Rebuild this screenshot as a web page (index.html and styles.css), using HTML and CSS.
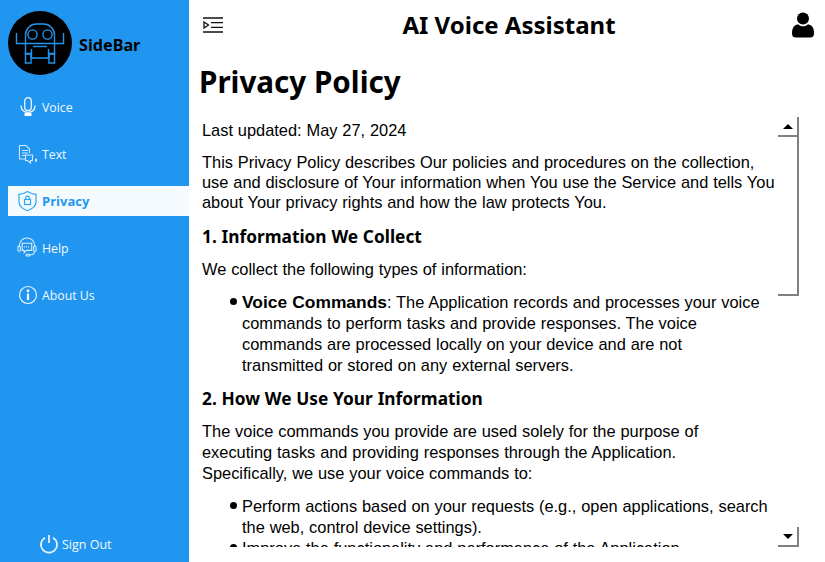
FILE: index.html
```html
<!DOCTYPE html>
<html lang="en">
<head>
<meta charset="utf-8">
<title>AI Voice Assistant</title>
<link rel="stylesheet" href="styles.css">
</head>
<body>
<div class="app">
  <aside class="sidebar">
    <div class="brand">
      <svg class="logo" width="64" height="64" viewBox="0 0 64 64">
        <circle cx="32" cy="32" r="32" fill="#000"/>
        <g fill="none" stroke="#2196f0" stroke-width="1.400">
          <path d="M17.500 32v-8a11 11 0 0 1 11-11h7a11 11 0 0 1 11 11v8"/>
          <circle cx="24.500" cy="23.500" r="4.600"/>
          <circle cx="39.500" cy="23.500" r="4.600"/>
          <path d="M8.500 22v10.500h47V22"/>
          <path d="M25 35.500h14"/>
          <path d="M17.500 32.500v10h6M46.500 32.500v10h-6"/>
          <path d="M23.500 38v9h17v-9"/>
          <path d="M17.500 43h5.500v9h-5.500zM41 43h5.500v9H41z"/>
        </g>
      </svg>
      <span class="brand-name">SideBar</span>
    </div>
    <nav class="nav">
      <a class="nav-item">
        <svg class="nav-icon" width="20" height="22" viewBox="0 0 20 22" fill="none" stroke="#eef7ff" stroke-width="1.300">
          <rect x="7.700" y="1.700" width="6.600" height="12.800" rx="3.300"/>
          <path d="M4 9.500c0 4.500 2.800 6.800 7 6.800s7-2.300 7-6.800"/>
          <path d="M7.500 18.500h7" stroke="#fff" stroke-width="3"/>
        </svg>
        <span>Voice</span>
      </a>
      <a class="nav-item">
        <svg class="nav-icon" width="20" height="22" viewBox="0 0 20 22" fill="none" stroke="#cfe8fd" stroke-width="1.100">
          <path d="M8 16H2.500V2.500h6.500l3.500 3.500V10"/>
          <path d="M5 7.500h6M5 10h6M5 12.500h3"/>
          <path d="M8.500 12h7v5.500h-2v2.500l-3-2.500h-2z"/>
          <path d="M18.500 16h1v2.500h-1z" stroke-width="1"/>
        </svg>
        <span>Text</span>
      </a>
      <a class="nav-item active">
        <svg class="nav-icon" width="20" height="22" viewBox="0 0 20 22" fill="none" stroke="#2aa5f2" stroke-width="1.200">
          <path d="M10.500 1.500c2.500 1.600 5 2.600 8.500 2.800V12c0 4-3.500 6.800-8.500 8.700C5.500 18.800 2 16 2 12V4.300c3.500-.2 6-1.200 8.500-2.800z"/>
          <rect x="7.500" y="9.500" width="6" height="5"/>
          <path d="M8.700 9.500V8a1.800 1.800 0 0 1 3.600 0v1.500"/>
        </svg>
        <span>Privacy</span>
      </a>
      <a class="nav-item">
        <svg class="nav-icon" width="20" height="22" viewBox="0 0 21 22" fill="none" stroke="#dff0ff" stroke-width="1.100">
          <path d="M2.500 10V8.500a8 8 0 0 1 16 0V10"/>
          <rect x="1" y="9" width="2.500" height="5.500" rx="1.200"/>
          <rect x="17.500" y="9" width="2.500" height="5.500" rx="1.200"/>
          <path d="M5.500 6h10v7.500H10L7.500 16v-2.500h-2z"/>
          <path d="M7.500 9.800h6" stroke-dasharray="1 1" stroke-width="1.500"/>
          <path d="M18.500 14.500c0 2.500-2.500 3.800-5 3.800"/>
          <rect x="9.500" y="17.500" width="4" height="2" rx="1"/>
        </svg>
        <span>Help</span>
      </a>
      <a class="nav-item">
        <svg class="nav-icon" width="20" height="22" viewBox="0 0 20 22" fill="none">
          <circle cx="11" cy="11" r="8.500" stroke="#e6f4ff" stroke-width="1.200"/>
          <circle cx="11" cy="6.800" r="1.400" fill="#fff"/>
          <path d="M11 9.500v6.500" stroke="#fff" stroke-width="2.200"/>
        </svg>
        <span>About Us</span>
      </a>
    </nav>
    <a class="signout">
      <svg width="20" height="20" viewBox="0 0 20 20" fill="none" stroke="#eaf5ff" stroke-width="1.700">
        <path d="M6 3.700a8 8 0 1 0 8 0"/>
        <path d="M10 1v8"/>
      </svg>
      <span>Sign Out</span>
    </a>
  </aside>
  <main class="main">
    <header class="topbar">
      <svg class="menu-icon" width="20" height="16" viewBox="0 0 20 16" fill="none" stroke="#111" stroke-width="1.300">
        <path d="M0 1h20M0 15h20M8 5.700h12M8 10.300h12"/>
        <path d="M1 5l4.500 3L1 11z"/>
      </svg>
      <h1 class="app-title">AI Voice Assistant</h1>
      <svg class="user-icon" width="22" height="26" viewBox="0 0 22 26" fill="#000">
        <circle cx="11" cy="6.500" r="6"/>
        <path d="M0 21c0-5 2-8 6-8.800 1.500 1.600 3 2 5 2s3.500-.4 5-2c4 .8 6 3.800 6 8.800 0 3-1 4.500-4 4.500H4c-3 0-4-1.500-4-4.500z"/>
      </svg>
    </header>
    <h2 class="page-title">Privacy Policy</h2>
    <section class="doc-wrap">
      <div class="doc">
        <p>Last updated: May 27, 2024</p>
        <p class="tight">This Privacy Policy describes Our policies and procedures on the collection,<br>use and disclosure of Your information when You use the Service and tells You<br>about Your privacy rights and how the law protects You.</p>
        <h3>1. Information We Collect</h3>
        <p>We collect the following types of information:</p>
        <ul>
          <li><b>Voice Commands</b>: The Application records and processes your voice<br>commands to perform tasks and provide responses. The voice<br>commands are processed locally on your device and are not<br>transmitted or stored on any external servers.</li>
        </ul>
        <h3>2. How We Use Your Information</h3>
        <p>The voice commands you provide are used solely for the purpose of<br>executing tasks and providing responses through the Application.<br>Specifically, we use your voice commands to:</p>
        <ul>
          <li>Perform actions based on your requests (e.g., open applications, search<br>the web, control device settings).</li>
          <li>Improve the functionality and performance of the Application.</li>
        </ul>
      </div>
      <div class="scrollbar">
        <div class="sb-btn"><span class="arrow-up"></span></div>
        <div class="sb-handle"></div>
        <div class="sb-track"></div>
        <div class="sb-btn"><span class="arrow-down"></span></div>
      </div>
    </section>
  </main>
</div>
</body>
</html>
```
FILE: styles.css
```css
* { box-sizing: border-box; }
html, body { margin: 0; height: 100%; overflow: hidden; }
body { background: #fff; color: #000; font-family: "Liberation Sans", sans-serif; }
.app { display: flex; width: 825px; height: 562px; }

.sidebar { width: 189px; flex: none; background: #2196f0; display: flex; flex-direction: column; padding: 11px 0 0 8px; }
.brand { display: flex; align-items: center; gap: 7px; height: 64px; }
.logo { flex: none; }
.brand-name { font: 700 16.200px "Noto Sans", sans-serif; color: #000; padding-top: 3px; }
.nav { display: flex; flex-direction: column; gap: 17px; margin-top: 17px; }
.nav-item { display: flex; align-items: center; gap: 5px; height: 30px; padding-left: 9px; color: #f2f9ff; font: 12.300px "Open Sans", sans-serif; }
.nav-icon { flex: none; overflow: visible; }
.nav-item.active { background: #f5faff; color: #2196f0; font-weight: 700; font-size: 13px; }
.signout { margin-top: auto; margin-bottom: 8px; margin-left: 31px; display: flex; align-items: center; gap: 3px; color: #f2f9ff; font: 12.500px "Open Sans", sans-serif; }

.main { flex: 1; min-width: 0; display: flex; flex-direction: column; }
.topbar { height: 50px; display: flex; align-items: center; justify-content: space-between; padding: 0 11px 0 14px; flex: none; }
.app-title { margin: 0 0 2px 3px; font: 700 24px "Noto Sans", sans-serif; }
.user-icon { flex: none; }
.page-title { margin: 12px 0 0 10px; font: 700 29.600px/40px "Noto Sans", sans-serif; height: 42px; }
.doc-wrap { display: flex; height: 430px; margin-top: 13px; }
.doc { width: 589px; flex: none; padding: 3px 0 0 13px; overflow: hidden; font: 16.400px/21px "Liberation Sans", sans-serif; word-spacing: 0.300px; white-space: nowrap; color: #000; }
.doc p { margin: 0 0 11px; }
.doc .tight { line-height: 20px; margin-bottom: 14px; }
.doc h3 { margin: 0 0 12px; font: 700 17.300px/21px "Noto Sans", sans-serif; }
.doc b { font-size: 17.400px; }
.doc ul { margin: 12px 0 12px; padding: 0 0 0 40px; list-style: none; }
.doc li { position: relative; }
.doc li::before { content: ""; position: absolute; left: -12px; top: 6px; width: 7px; height: 7px; border-radius: 50%; background: #000; }
.scrollbar { width: 21px; display: flex; flex-direction: column; }
.sb-btn { height: 20px; flex: none; display: flex; align-items: center; justify-content: center; border-right: 2px solid #808080; border-bottom: 2px solid #808080; }
.sb-handle { height: 159px; flex: none; border-right: 2px solid #808080; border-bottom: 2px solid #808080; }
.sb-track { flex: 1; }
.arrow-up { width: 0; height: 0; border: 5px solid transparent; border-top: 0; border-bottom: 5px solid #000; }
.arrow-down { width: 0; height: 0; border: 5px solid transparent; border-bottom: 0; border-top: 5px solid #000; }
```
